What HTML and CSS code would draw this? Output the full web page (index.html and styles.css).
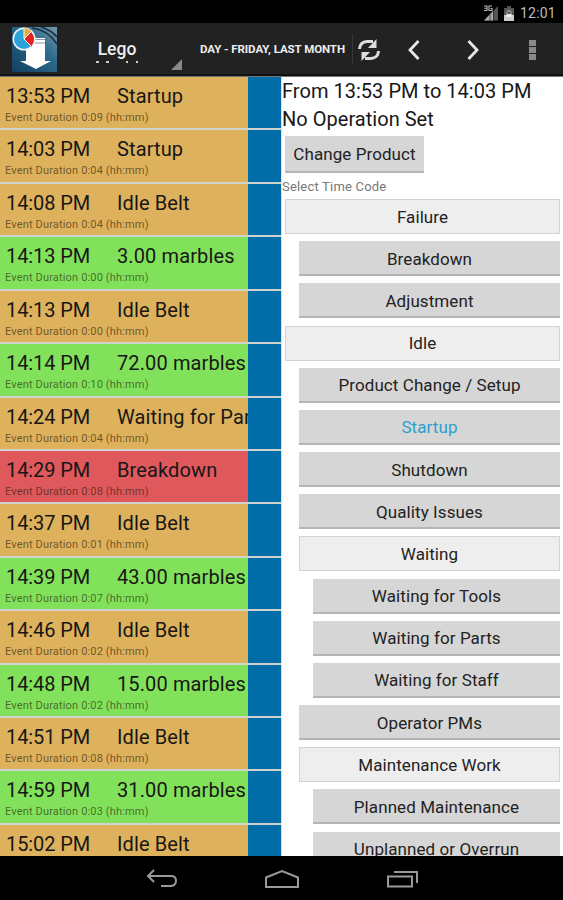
FILE: index.html
```
<!DOCTYPE html>
<html lang="en">
<head>
    <meta charset="UTF-8">
    <meta name="viewport" content="width=device-width, initial-scale=1.0">
    <title>Lego - Events</title>
    <link rel="stylesheet" href="styles.css">
</head>
<body>
    <div class="status-bar">
        <svg class="signal" width="16" height="16" viewBox="0 0 16 16">
            <path d="M1 15.500L15 1V15.500z" fill="#555"/>
            <path d="M1 15.500L10 6V15.500z" fill="#aaa"/>
            <path d="M7 9v7M10.500 5v11" stroke="#222" stroke-width=".7"/>
            <path d="M1 1h3v4.500H1M1.500 3.200H4M9 1H6v4.500h3V3.500H7.500" fill="none" stroke="#bbb" stroke-width="1.100"/>
        </svg>
        <svg class="battery" width="10" height="15" viewBox="0 0 10 15">
            <path d="M3 0h4v2h3v13H0V2h3z" fill="#555"/>
            <path d="M0 9h10v6H0z" fill="#ccc"/>
            <path d="M3 8V6q2-3 4 0v2" fill="none" stroke="#999" stroke-width="1.300"/>
            <path d="M2.500 8h5v3h-5z" fill="#eee"/>
        </svg>
        <span class="clock">12:01</span>
    </div>

    <header class="action-bar">
        <svg class="logo" width="45" height="45" viewBox="0 0 45 45">
            <defs>
                <linearGradient id="logoBg" x1="0" y1="1" x2="1" y2="0">
                    <stop offset="0" stop-color="#123f5f"/>
                    <stop offset=".6" stop-color="#2b6a8c"/>
                    <stop offset="1" stop-color="#7797a8"/>
                </linearGradient>
            </defs>
            <path d="M0 0h45v45H0z" fill="url(#logoBg)"/>
            <path d="M20 1Q36 3 45 17M29 0Q39 3 45 10" fill="none" stroke="#152f3e" stroke-width="1.500"/>
            <path d="M14 11h19v23h6L24 42 8 34h6z" fill="#fff"/>
            <path d="M22 12.500h11M22 16h11" stroke="#879cad" stroke-width="1.200"/>
            <circle cx="12" cy="12" r="11.500" fill="#f2f6f8"/>
            <circle cx="12" cy="12" r="10" fill="#2ba3da"/>
            <path d="M12 12V1q4 0 7 3z" fill="#eead35"/>
            <path d="M12 12l7-7q6 7 0 15z" fill="#e72020"/>
            <path d="M12 1v11l7 7M12 12l7-7" fill="none" stroke="#f2f6f8"/>
        </svg>
        <div class="spinner">
            <span class="spinner-title">Lego</span>
            <span class="spinner-sub"><i></i><i></i><i></i><i></i></span>
        </div>
        <span class="corner"></span>
        <span class="period">DAY - FRIDAY, LAST MONTH</span>
        <svg class="refresh" width="24" height="24" viewBox="0 0 24 24">
            <path d="M2.500 11Q3 4 10 3.500h6M21.500 13Q21 20 14 20.500H8" fill="none" stroke="#ddd" stroke-width="3"/>
            <path d="M19.500 1v9H11zM4.500 23v-9H13z" fill="#ddd"/>
        </svg>
        <svg class="arrow prev" width="14" height="22" viewBox="0 0 14 22">
            <path d="M11.500 2L3 11l8.500 9" fill="none" stroke="#e8e8e8" stroke-width="2.800"/>
        </svg>
        <svg class="arrow next" width="14" height="22" viewBox="0 0 14 22">
            <path d="M2.500 2L11 11l-8.500 9" fill="none" stroke="#e8e8e8" stroke-width="2.800"/>
        </svg>
        <span class="overflow"><i></i><i></i><i></i></span>
    </header>

    <main class="content">
        <section class="events">
            <div class="event idle"><div class="event-body"><p class="event-line"><span class="time">13:53 PM</span><span>Startup</span></p><p class="duration">Event Duration 0:09 (hh:mm)</p></div></div>
            <div class="event idle"><div class="event-body"><p class="event-line"><span class="time">14:03 PM</span><span>Startup</span></p><p class="duration">Event Duration 0:04 (hh:mm)</p></div></div>
            <div class="event idle"><div class="event-body"><p class="event-line"><span class="time">14:08 PM</span><span>Idle Belt</span></p><p class="duration">Event Duration 0:04 (hh:mm)</p></div></div>
            <div class="event running"><div class="event-body"><p class="event-line"><span class="time">14:13 PM</span><span>3.00 marbles</span></p><p class="duration">Event Duration 0:00 (hh:mm)</p></div></div>
            <div class="event idle"><div class="event-body"><p class="event-line"><span class="time">14:13 PM</span><span>Idle Belt</span></p><p class="duration">Event Duration 0:00 (hh:mm)</p></div></div>
            <div class="event running"><div class="event-body"><p class="event-line"><span class="time">14:14 PM</span><span>72.00 marbles</span></p><p class="duration">Event Duration 0:10 (hh:mm)</p></div></div>
            <div class="event idle"><div class="event-body"><p class="event-line"><span class="time">14:24 PM</span><span>Waiting for Parts</span></p><p class="duration">Event Duration 0:04 (hh:mm)</p></div></div>
            <div class="event failure"><div class="event-body"><p class="event-line"><span class="time">14:29 PM</span><span>Breakdown</span></p><p class="duration">Event Duration 0:08 (hh:mm)</p></div></div>
            <div class="event idle"><div class="event-body"><p class="event-line"><span class="time">14:37 PM</span><span>Idle Belt</span></p><p class="duration">Event Duration 0:01 (hh:mm)</p></div></div>
            <div class="event running"><div class="event-body"><p class="event-line"><span class="time">14:39 PM</span><span>43.00 marbles</span></p><p class="duration">Event Duration 0:07 (hh:mm)</p></div></div>
            <div class="event idle"><div class="event-body"><p class="event-line"><span class="time">14:46 PM</span><span>Idle Belt</span></p><p class="duration">Event Duration 0:02 (hh:mm)</p></div></div>
            <div class="event running"><div class="event-body"><p class="event-line"><span class="time">14:48 PM</span><span>15.00 marbles</span></p><p class="duration">Event Duration 0:02 (hh:mm)</p></div></div>
            <div class="event idle"><div class="event-body"><p class="event-line"><span class="time">14:51 PM</span><span>Idle Belt</span></p><p class="duration">Event Duration 0:08 (hh:mm)</p></div></div>
            <div class="event running"><div class="event-body"><p class="event-line"><span class="time">14:59 PM</span><span>31.00 marbles</span></p><p class="duration">Event Duration 0:03 (hh:mm)</p></div></div>
            <div class="event idle"><div class="event-body"><p class="event-line"><span class="time">15:02 PM</span><span>Idle Belt</span></p></div></div>
        </section>

        <section class="detail">
            <p class="range">From 13:53 PM to 14:03 PM</p>
            <p class="range operation">No Operation Set</p>
            <button class="change">Change Product</button>
            <p class="label">Select Time Code</p>
            <div class="codes">
                <button class="code group">Failure</button>
                <button class="code level-1">Breakdown</button>
                <button class="code level-1">Adjustment</button>
                <button class="code group">Idle</button>
                <button class="code level-1">Product Change / Setup</button>
                <button class="code level-1 selected">Startup</button>
                <button class="code level-1">Shutdown</button>
                <button class="code level-1">Quality Issues</button>
                <button class="code level-1 group">Waiting</button>
                <button class="code level-2">Waiting for Tools</button>
                <button class="code level-2">Waiting for Parts</button>
                <button class="code level-2">Waiting for Staff</button>
                <button class="code level-1">Operator PMs</button>
                <button class="code level-1 group">Maintenance Work</button>
                <button class="code level-2">Planned Maintenance</button>
                <button class="code level-2">Unplanned or Overrun</button>
            </div>
        </section>
    </main>

    <nav class="nav-bar">
        <svg width="32" height="20" viewBox="0 0 32 20">
            <path d="M8 1L2 7l6 6M2 7h23q5 0 5 4.700T25 17H15" fill="none" stroke="#999" stroke-width="2"/>
        </svg>
        <svg width="36" height="20" viewBox="0 0 36 20">
            <path d="M2 18V8.500L18 2l16 6.500V18z" fill="none" stroke="#999" stroke-width="2"/>
        </svg>
        <svg width="33" height="20" viewBox="0 0 33 20">
            <path d="M2 7.500h24V17.500H2zM8 3h23v11" fill="none" stroke="#999" stroke-width="2"/>
        </svg>
    </nav>
</body>
</html>
```
FILE: styles.css
```
* {
    box-sizing: border-box;
}
body {
    margin: 0;
    height: 900px;
    display: flex;
    flex-direction: column;
    overflow: hidden;
    font-family: Roboto, sans-serif;
    background-color: #000;
    color: #171717;
}
p {
    margin: 0;
}
svg {
    flex: none;
}
.status-bar {
    height: 23px;
    display: flex;
    align-items: center;
    justify-content: flex-end;
    padding: 3px 7px 0 0;
    color: #bbb;
}
.battery {
    margin: 0 6px 0 5px;
}
.clock {
    width: 36px;
    font-size: 14px;
    letter-spacing: 0.2px;
    white-space: nowrap;
}
.action-bar {
    height: 53px;
    display: flex;
    align-items: center;
    flex: none;
    background-color: #222;
    border-bottom: 2px solid #111;
    color: #eee;
}
.logo {
    margin: 1px 0 0 12px;
}
.spinner {
    width: 60px;
    margin: 3px 0 0 30px;
    display: flex;
    flex-direction: column;
    align-items: center;
}
.spinner-title {
    font-size: 17.5px;
    line-height: 22px;
    font-weight: 500;
}
/* only the tops of the second line show */
.spinner-sub {
    display: flex;
    height: 2px;
    margin-top: 1px;
}
.spinner-sub i {
    width: 3px;
    height: 2px;
    background-color: #ccc;
}
.spinner-sub i:nth-child(2) {
    margin-left: 7px;
}
.spinner-sub i:nth-child(3) {
    width: 2px;
    margin-left: 17px;
}
.spinner-sub i:nth-child(4) {
    width: 2px;
    margin-left: 8px;
}
.corner {
    align-self: flex-end;
    margin: 0 0 4px 24px;
    border-left: 11px solid transparent;
    border-bottom: 11px solid #888;
}
.period {
    width: 153px;
    height: 30px;
    line-height: 31px;
    margin-left: 18px;
    border-right: 1px solid #383838;
    font-size: 11.5px;
    font-weight: bold;
    letter-spacing: -0.07px;
    white-space: nowrap;
}
.refresh {
    margin: 2px 0 0 4px;
}
.arrow {
    margin: 2px 0 0 26px;
}
.next {
    margin-left: 45px;
}
.overflow {
    display: flex;
    flex-direction: column;
    gap: 1px;
    margin: 2px 0 0 49px;
}
.overflow i {
    width: 7px;
    height: 6px;
    background-color: #888;
}
.content {
    flex: 1;
    min-height: 0;
    display: flex;
    overflow: hidden;
    background-color: #fff;
    border-top: 1px solid #777;
}
.events {
    width: 282px;
    flex: none;
    border-right: 1px solid #d8e2ea;
}
.event {
    height: 53.43px;
    padding-right: 33px;
    background-color: #006ca8;
    border-bottom: 2px solid #ced3cf;
}
.event-body {
    height: 100%;
    padding: 7px 0 0 6px;
    overflow: hidden;
}
.idle .event-body {
    background-color: #deb15c;
}
.running .event-body {
    background-color: #82e15a;
}
.failure .event-body {
    background-color: #de585c;
}
.event-line {
    display: flex;
    font-size: 20px;
    line-height: 25px;
    letter-spacing: 0.12px;
    white-space: nowrap;
}
.time {
    width: 111px;
    flex: none;
    letter-spacing: -0.1px;
}
.duration {
    font-size: 11px;
    line-height: 15px;
    letter-spacing: 0.16px;
    margin: 1px 0 0 -1px;
    color: rgba(35, 25, 10, 0.62);
}
.detail {
    flex: 1;
    padding: 1px 3px 0 0;
}
.range {
    font-size: 20px;
    line-height: 27px;
    letter-spacing: 0.03px;
    white-space: nowrap;
}
.operation {
    padding-top: 1px;
    margin-bottom: 3px;
}
button {
    display: block;
    border: 0;
    border-bottom: 2px solid #b5b5b5;
    padding: 2px 0 0;
    background-color: #d6d6d6;
    color: #222;
    font-family: inherit;
    font-size: 17px;
    letter-spacing: 0.08px;
}
.change {
    width: 139px;
    height: 37px;
    margin-left: 3px;
    padding-top: 0;
}
.label {
    font-size: 13px;
    line-height: 16px;
    letter-spacing: 0.2px;
    margin: 6px 0 4px;
    color: #777;
}
.codes {
    display: flex;
    flex-direction: column;
    gap: 7.18px;
    padding-left: 3px;
}
.code {
    height: 35px;
    flex: none;
}
.group {
    padding-top: 0;
    background-color: #eee;
    border: 1px solid #d3d3d3;
}
.level-1 {
    margin-left: 14px;
}
.level-2 {
    margin-left: 28px;
}
.selected {
    color: #2ca0cb;
}
.nav-bar {
    height: 44px;
    flex: none;
    display: flex;
    align-items: center;
    justify-content: center;
    gap: 86px;
    padding: 2px 0 0 1px;
    background-color: #000;
}
```
